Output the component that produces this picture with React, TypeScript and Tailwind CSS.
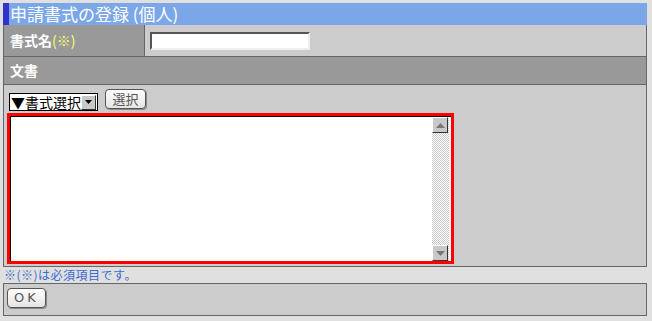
import React from 'react';

const jp = { fontFamily: '"Noto Sans CJK JP", "Noto Sans", sans-serif' };

function ScrollArrow({ up }: { up: boolean }) {
  return (
    <div className="w-[16px] h-[16px] bg-[#c8c8c8] border border-t-white border-l-white border-b-[#333] border-r-[#333] flex items-center justify-center">
      <svg width="9" height="5" viewBox="0 0 9 5">
        {up ? <polygon points="0,5 9,5 4.5,0" fill="#777" /> : <polygon points="0,0 9,0 4.5,5" fill="#777" />}
      </svg>
    </div>
  );
}

function App() {
  return (
    <div className="w-[652px] h-[321px] bg-[#e0e0e0] pt-[3px] pl-[3px]" style={jp}>
      <div className="w-[644px]">
        {/* title bar */}
        <div className="h-[22px] bg-[#7ba7e8] border-l-[6px] border-[#3333cc] pl-[1px] text-white text-[17px] leading-[22px] whitespace-pre">
          申請書式の登録 (個人)
        </div>

        <div className="border-x border-b border-[#666]">
          <div className="flex h-[32px] border-b border-[#666]">
            <div className="w-[141px] bg-[#999] border-r border-[#666] pl-[6px] flex items-center text-white text-[14px] font-bold">
              書式名<span className="text-[#ffff66] font-normal">(※)</span>
            </div>
            <div className="flex-1 bg-[#ccc] flex items-center pl-[5px]">
              <div className="w-[160px] h-[18px] bg-white border-2 border-t-[#555] border-l-[#555] border-b-[#eee] border-r-[#eee]" />
            </div>
          </div>
          <div className="h-[28px] bg-[#999] border-b border-[#666] pl-[6px] flex items-center text-white text-[14px] font-bold">
            文書
          </div>
          <div className="bg-[#ccc] h-[181px] pt-[4px] pl-[3px]">
            <div className="flex items-end gap-[7px] pl-[2px]">
              <div className="w-[89px] h-[18px] bg-white border border-black flex items-center mb-[-2px]">
                <span className="flex-1 text-[14px] leading-none text-black pl-[1px] whitespace-nowrap">▼書式選択</span>
                <div className="w-[15px] h-[15px] bg-[#c8c8c8] border border-t-white border-l-white border-b-[#333] border-r-[#333] flex items-center justify-center mr-[1px]">
                  <svg width="7" height="4" viewBox="0 0 7 4"><polygon points="0,0 7,0 3.5,4" fill="#000" /></svg>
                </div>
              </div>
              <div className="w-[41px] h-[20px] rounded-[4px] border border-[#555] bg-gradient-to-b from-white to-[#e4e4e4] flex items-center justify-center text-[13px] text-[#555] shadow-[1px_1px_0_#888]">
                選択
              </div>
            </div>
            <div className="mt-[4px] w-[447px] h-[151px] border-[3px] border-[#ff0000] flex">
              <div className="flex-1 flex border-t border-l border-black bg-white">
                <div className="flex-1" />
                <div className="w-[17px] flex flex-col mr-[2px] bg-[repeating-conic-gradient(#c8c8c8_0_25%,#ffffff_0_50%)] bg-[length:2px_2px]">
                  <ScrollArrow up />
                  <div className="flex-1" />
                  <ScrollArrow up={false} />
                </div>
              </div>
            </div>
          </div>
        </div>

        <div className="h-[15px] text-[12px] leading-[15px] text-[#3a6bd0] pl-[1px] tracking-[0.5px]">※(※)は必須項目です。</div>

        <div className="mt-[1px] h-[33px] border border-[#666] bg-[#ccc] pl-[3px] pt-[4px]">
          <div className="w-[39px] h-[20px] rounded-[4px] border border-[#555] bg-gradient-to-b from-white to-[#e4e4e4] flex items-center justify-center text-[13px] text-[#555] tracking-[3px] shadow-[1px_1px_0_#888]" style={{ fontFamily: '"DejaVu Sans", sans-serif' }}>
              OK
          </div>
        </div>
      </div>
    </div>
  );
}

export default App;
